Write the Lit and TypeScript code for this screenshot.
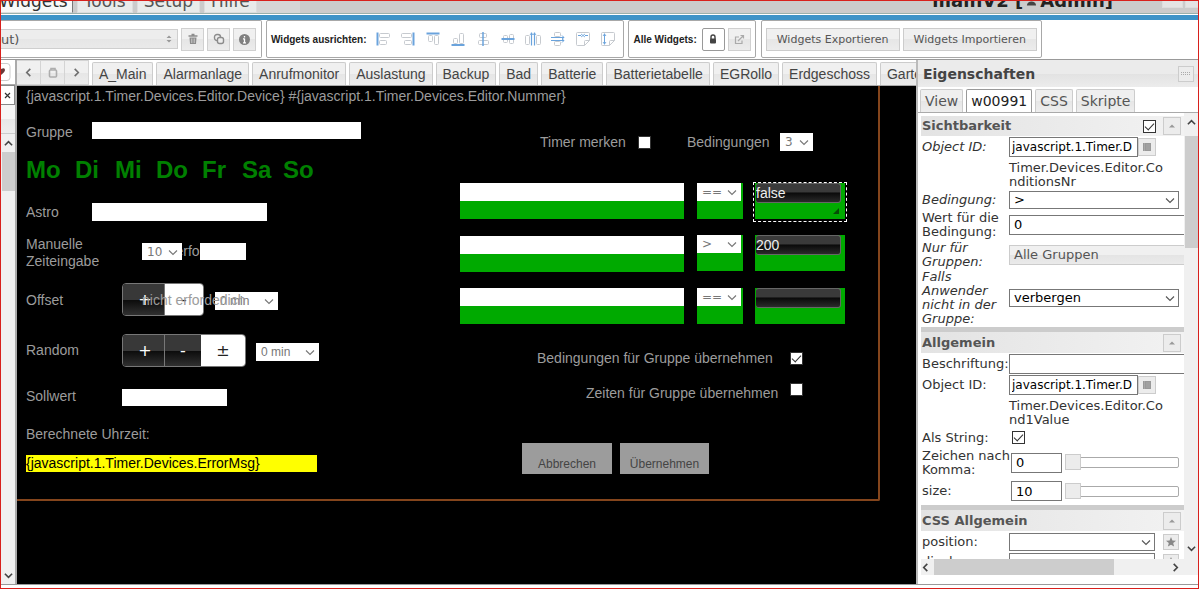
import { LitElement, html, svg, css, TemplateResult } from "lit";
import { customElement, state } from "lit/decorators.js";
import { classMap } from "lit/directives/class-map.js";
import { styleMap } from "lit/directives/style-map.js";

const SANS = css`"Liberation Sans", Arial, sans-serif`;
const WIDE = css`"DejaVu Sans", Verdana, sans-serif`;

const chevron = (size: number, d = "M1 3.5 L5 7.5 L9 3.5") => html`
  <svg class="chev" width=${size} height=${size} viewBox="0 0 10 10" fill="none" stroke="currentColor" stroke-width="1.1" aria-hidden="true"><path d=${d}></path></svg>`;

const UP = "M1 7 L5 3 L9 7";
const DOWN = "M1 3 L5 7 L9 3";
const LEFT = "M7 1 L3 5 L7 9";
const RIGHT = "M3 1 L7 5 L3 9";

const bar = (d: string) => html`
  <svg width="9" height="9" viewBox="0 0 10 10" fill="none" stroke="#444" stroke-width="1.8" aria-hidden="true"><path d=${d}></path></svg>`;

const shared = css`
  *, *::before, *::after { box-sizing: border-box; }
  button, input, select { font: inherit; color: inherit; margin: 0; border-radius: 0; }
  button { padding: 0; cursor: pointer; }
  svg { display: block; flex: none; }
  .combo { display: grid; align-items: center; }
  .combo > select { grid-area: 1 / 1; appearance: none; width: 100%; height: 100%; outline: none; }
  .combo > .chev { grid-area: 1 / 1; justify-self: end; margin-right: 4px; pointer-events: none; }
  .check { appearance: none; width: 13px; height: 13px; background: #fff; border: 1px solid #333; display: grid; place-items: center; flex: none; }
  .check:checked::before { content: ""; width: 9px; height: 5px; border: solid #333; border-width: 0 0 1px 1px; transform: translateY(-1px) rotate(-47deg); }
`;

/* ---------- toolbar ---------- */

const boxA = (x: number, y: number, w: number, h: number) =>
  svg`<rect x=${x} y=${y} width=${w} height=${h} rx="1" fill="#fff" stroke="#c6cacf" stroke-width="1"/>`;
const blue = (d: string, w = 1.5) => svg`<path d=${d} fill="none" stroke="#6aa3dc" stroke-width=${w}/>`;
const page = svg`<path d="M2.5 1.5h11q1 0 1 1v7l-5 5h-7q-1 0-1-1v-11q0-1 1-1z M9.5 14.5v-4q0-1 1-1h4" fill="#fff" stroke="#c6cacf"/>`;

const ALIGN: { label: string; art: unknown }[] = [
  { label: "Links", art: [boxA(4.5, 2.5, 10, 4), boxA(4.5, 9.5, 7, 4), blue("M2.5 1.500v13", 2)] },
  { label: "Rechts", art: [boxA(1.5, 2.5, 10, 4), boxA(4.5, 9.5, 7, 4), blue("M13.5 1.500v13", 2)] },
  { label: "Oben", art: [boxA(3.5, 4.5, 4, 6), boxA(9.5, 4.5, 4, 9), blue("M1.500 2.5h13", 2)] },
  { label: "Unten", art: [boxA(3.5, 7.5, 4, 5), boxA(9.5, 2.5, 4, 10), blue("M1.500 14h13", 2)] },
  { label: "Mitte vertikal", art: [boxA(4.5, 2.5, 7, 4), boxA(3.5, 9.5, 10, 4), blue("M8 1v14", 1.5)] },
  { label: "Mitte horizontal", art: [boxA(3.5, 4.5, 4, 7), boxA(9.5, 3.5, 4, 9), blue("M1.500 8h13", 2)] },
  { label: "Abstand horizontal", art: [boxA(0.5, 4.5, 4, 9), boxA(11.5, 4.5, 4, 9), blue("M6.5 1.500v13M9.5 1.500v13", 1.2), blue("M5 4l1.500-2 1.500 2M8 4l1.500-2 1.500 2", 0.8)] },
  { label: "Abstand vertikal", art: [boxA(4.5, 1.5, 6, 4), boxA(4.5, 10.5, 6, 4), blue("M1 6.5h13M1 9.5h13", 1.2), blue("M12 4.500l2 2-2 1.500M12 8l2 1.500-2 2", 1)] },
  { label: "Gleiche Breite", art: [page, blue("M3 4.5h3M10 4.5h3", 1.2), blue("M6 3l2 1.5-2 1.5M10 3l-2 1.5 2 1.5", 0.8)] },
  { label: "Gleiche Höhe", art: [page, blue("M4.5 2.500v11", 1), blue("M3 5l1.5-2L6 5M3 11l1.5 2L6 11", 0.9)] },
];

@customElement("vis-toolbar")
class VisToolbar extends LitElement {
  static styles = [shared, css`
    :host { display: flex; gap: 4px; height: 40px; background: #fff; border-bottom: 1px solid #999; padding-bottom: 1px; }
    .group { display: flex; align-items: center; border: 1px solid #a8a8a8; border-radius: 2px; padding: 0 4px; }
    .pick { border-left: 0; padding: 0 5px 0 0; gap: 3px; border-radius: 0 2px 2px 0; }
    .combo { width: 177px; height: 20px; font: 13px ${WIDE}; color: #555; background: linear-gradient(#ededed 50%, #e6e6e6 50%, #eaeaea); }
    .combo > select { border: 1px solid #cfcfcf; border-left: 0; background: transparent; padding: 0; }
    .updown { grid-area: 1 / 1; justify-self: end; margin-right: 5px; pointer-events: none; }
    .tool { width: 23px; height: 23px; border: 1px solid #d0d0d0; background: linear-gradient(#f0f0f0 50%, #e6e6e6 50%, #ececec); display: grid; place-items: center; color: #888; flex: none; }
    .tool.on { background: #fff; border-color: #999; border-radius: 2px; color: #444; }
    .caption { font: bold 10px ${SANS}; color: #222; white-space: nowrap; }
    .icons { display: flex; gap: 9px; padding: 0 3px 0 9px; }
    .icon { border: 0; background: none; width: 16px; height: 16px; }
    .all { gap: 3px; }
    .all .caption { margin-right: 2px; }
    .io { gap: 3px; margin-left: 1px; }
    .io button { height: 23px; padding: 0 10px; border: 1px solid #ccc; background: linear-gradient(#f0f0f0 50%, #e6e6e6 50%, #ececec); font: 11px ${WIDE}; color: #555; white-space: nowrap; }
  `];

  render() {
    return html`
      <div class="group pick">
        <span class="combo">
          <select aria-label="Widget auswählen"><option>ut)</option></select>
          <svg class="updown" width="8" height="10" viewBox="0 0 8 10" fill="#999"><path d="M1.5 4 4 1.5 6.5 4z M1.5 6 4 8.5 6.5 6z"></path></svg>
        </span>
        <button class="tool" aria-label="Löschen">
          <svg width="12" height="12" viewBox="0 0 12 12"><path d="M1.500 3h9M4.500 1.500h3" stroke="#8c8c8c" stroke-width="1.400"></path><path d="M2.500 4.500h7l-.5 6.500h-6z" fill="#8c8c8c"></path><path d="M4.800 5.500v4.500M7.200 5.500v4.500" stroke="#ddd" stroke-width=".8"></path></svg>
        </button>
        <button class="tool" aria-label="Kopieren">
          <svg width="12" height="12" viewBox="0 0 12 12" fill="#eee" stroke="#8c8c8c" stroke-width="1.400"><rect x="1.500" y="1.500" width="6" height="6" rx="2.500"></rect><rect x="4.500" y="4.500" width="6" height="6" rx="2"></rect></svg>
        </button>
        <button class="tool" aria-label="Info">
          <svg width="13" height="13" viewBox="0 0 13 13"><circle cx="6.500" cy="6.500" r="5.500" fill="#808080"></circle><path d="M6.500 3v1.600M6.500 5.600v4.400M5 5.900h1.500M5 9.800h3" stroke="#fff" stroke-width="1.300"></path></svg>
        </button>
      </div>
      <div class="group">
        <span class="caption">Widgets ausrichten:</span>
        <div class="icons">
          ${ALIGN.map((a) => html`<button class="icon" aria-label=${a.label}><svg width="16" height="16" viewBox="0 0 16 16">${a.art}</svg></button>`)}
        </div>
      </div>
      <div class="group all">
        <span class="caption">Alle Widgets:</span>
        <button class="tool on" aria-label="Sperren">
          <svg width="10" height="12" viewBox="0 0 10 12"><path d="M3 6V4a2 2 0 0 1 4 0v2" fill="none" stroke="#444" stroke-width="1.400"></path><rect x="2" y="5.500" width="6" height="5" rx="1" fill="#444"></rect></svg>
        </button>
        <button class="tool" aria-label="Öffnen">
          <svg width="11" height="11" viewBox="0 0 11 11" fill="none" stroke="#aaa" stroke-width="1.200"><path d="M5 3H1.500v6.500H8V6.500M4 7l5.500-5.500M6.500 1.500h3v3"></path></svg>
        </button>
      </div>
      <div class="group io">
        <button>Widgets Exportieren</button>
        <button>Widgets Importieren</button>
      </div>`;
  }
}

/* ---------- canvas ---------- */

interface Widget { x: number; y: number; w?: number; h?: number; body: TemplateResult | string; kind?: string; }

const field = (label: string) => html`<input class="fill" type="text" aria-label=${label} />`;
const pick = (label: string, value: string, wide = false) => html`
  <span class=${classMap({ combo: true, fill: true, wide })}><select aria-label=${label}><option>${value}</option></select>${chevron(10)}</span>`;

const DAYS: [string, number][] = [["Mo", 9], ["Di", 58], ["Mi", 98], ["Do", 139], ["Fr", 185], ["Sa", 225], ["So", 266]];
const CONDITIONS = [
  { top: 97, fieldTop: 97, op: "==", value: "false" },
  { top: 149, fieldTop: 150, op: ">", value: "200" },
  { top: 202, fieldTop: 202, op: "==", value: "" },
];

const WIDGETS: Widget[] = [
  { x: 9, y: 2, body: "{javascript.1.Timer.Devices.Editor.Device} #{javascript.1.Timer.Devices.Editor.Nummer}" },
  { x: 9, y: 38, body: "Gruppe" },
  { x: 75, y: 36, w: 269, h: 17, body: field("Gruppe") },
  ...DAYS.map(([d, x]) => ({ x, y: 70, body: d, kind: "day" })),
  { x: 9, y: 118, body: "Astro" },
  { x: 75, y: 117, w: 175, h: 18, body: field("Astro") },
  { x: 9, y: 150, w: 90, body: "Manuelle Zeiteingabe", kind: "wrap" },
  { x: 125, y: 157, body: "nicht erforderlich" },
  { x: 125, y: 157, w: 40, h: 17, body: pick("Stunde", "10", true) },
  { x: 183, y: 157, w: 46, h: 17, body: field("Minute") },
  { x: 9, y: 206, body: "Offset" },
  { x: 105, y: 197, w: 82, h: 33, body: html`<span class="set fill"><button class="plus">+</button><button class="on">-</button></span>` },
  { x: 198, y: 206, w: 63, h: 18, body: pick("Offset in Minuten", "0 min") },
  { x: 125, y: 206, body: "nicht erforderlich" },
  { x: 9, y: 256, body: "Random" },
  { x: 105, y: 248, w: 124, h: 33, body: html`<span class="set fill"><button class="plus">+</button><button class="minus">-</button><button class="on">±</button></span>` },
  { x: 239, y: 257, w: 63, h: 18, body: pick("Random in Minuten", "0 min") },
  { x: 9, y: 302, body: "Sollwert" },
  { x: 105, y: 303, w: 105, h: 17, body: field("Sollwert") },
  { x: 9, y: 340, body: "Berechnete Uhrzeit:" },
  { x: 9, y: 369, w: 291, h: 17, body: "{javascript.1.Timer.Devices.ErrorMsg}", kind: "error" },
  { x: 523, y: 48, body: html`<label for="keep">Timer merken</label>` },
  { x: 621, y: 50, body: html`<input id="keep" class="check" type="checkbox" />` },
  { x: 670, y: 48, body: "Bedingungen" },
  { x: 763, y: 47, w: 33, h: 18, body: pick("Bedingungen", "3", true) },
  ...CONDITIONS.flatMap((c, i): Widget[] => [
    { x: 443, y: c.fieldTop, w: 224, h: 36, kind: "green", body: html`<input type="text" aria-label="Bedingung ${i + 1}" />` },
    { x: 680, y: c.top, w: 46, h: 36, kind: "green op", body: pick("Operator " + (i + 1), c.op, true) },
    { x: 738, y: c.top, w: 90, h: 36, kind: "green val", body: html`<input type="text" aria-label="Wert ${i + 1}" .value=${c.value} />` },
  ]),
  { x: 736, y: 96, w: 94, h: 40, kind: "selected", body: html`<svg width="6" height="6" viewBox="0 0 6 6"><path d="M6 0v6H0z" fill="#064d06"></path></svg>` },
  { x: 520, y: 264, body: html`<label for="cg">Bedingungen für Gruppe übernehmen</label>` },
  { x: 773, y: 266, body: html`<input id="cg" class="check" type="checkbox" checked />` },
  { x: 569, y: 299, body: html`<label for="zg">Zeiten für Gruppe übernehmen</label>` },
  { x: 773, y: 297, body: html`<input id="zg" class="check" type="checkbox" />` },
  { x: 505, y: 357, w: 90, h: 31, body: html`<button class="action fill">Abbrechen</button>` },
  { x: 603, y: 357, w: 89, h: 31, body: html`<button class="action fill">Übernehmen</button>` },
];

@customElement("vis-canvas")
class VisCanvas extends LitElement {
  static styles = [shared, css`
    :host { display: block; position: relative; overflow: hidden; background: #000; color: #9c9c9c; font: 14px/17px ${SANS}; }
    .frame { position: absolute; border: solid #84451c; border-width: 0 2px 2px 0; border-radius: 0 0 2px 0; }
    .w { position: absolute; white-space: nowrap; }
    .wrap { white-space: normal; }
    .day { font: bold 24px/28px ${SANS}; color: #008000; }
    .error { background: #ff0; color: #000; }
    .green { background: #00aa00; }
    .green > input { display: block; width: 100%; height: 18px; border: 0; background: #fff; padding: 0; }
    .op > .combo { width: 44px; height: 18px; }
    .val { padding: 0 4px 0 1px; }
    .val > input { height: 20px; border: 1px solid #666; border-left: 0; border-radius: 3px; color: #eee; background: linear-gradient(#3a3a3a 0 44%, #0a0a0a 50%, #2a2a2a); }
    .selected { border: 1px dashed #fff; display: flex; justify-content: end; align-items: end; padding: 7px; pointer-events: none; }
    .fill { width: 100%; height: 100%; }
    input.fill { display: block; border: 0; background: #fff; }
    .combo { background: #fff; color: #777; font: 12px ${SANS}; }
    .combo.wide { font: 12px ${WIDE}; }
    .combo > select { border: 0; background: transparent; padding: 0 0 0 5px; }
    .set { display: flex; font: 16px ${WIDE}; color: #fff; border: 1px solid #777; border-radius: 4px; overflow: hidden; }
    .set button { flex: 1; border: 0; background: linear-gradient(#383838 50%, #0c0c0c 52%, #303030); }
    .set .plus { flex: 0 0 42px; border-right: 1px solid #777; padding-left: 3px; }
    .set .minus { flex: 0 0 36px; }
    .set .on { background: #fff; color: #222; }
    .action { border: 0; background: #9c9c9c; color: #444; font: 12px ${SANS}; padding-top: 10px; }
  `];

  render() {
    return html`
      <div class="frame" style=${styleMap({ left: "0", top: "0", width: "863px", height: "415px" })}></div>
      ${WIDGETS.map((w) => html`<div class="w ${w.kind ?? ""}" style=${styleMap({
        left: `${w.x}px`, top: `${w.y}px`,
        ...(w.w ? { width: `${w.w}px` } : {}), ...(w.h ? { height: `${w.h}px` } : {}),
      })}>${w.body}</div>`)}`;
  }
}

/* ---------- properties ---------- */

@customElement("vis-properties")
class VisProperties extends LitElement {
  static styles = [shared, css`
    :host { display: flex; flex-direction: column; min-height: 0; border-left: 2px solid #bbb; background: #fff; font: 13px/14px ${WIDE}; color: #333; }
    .head { display: flex; align-items: center; justify-content: space-between; height: 27px; padding: 0 4px 0 5px; background: linear-gradient(#ebebeb 50%, #e2e2e2 50%, #ececec); }
    h1 { margin: 0; font: bold 14px/20px ${WIDE}; color: #444; }
    .fold { width: 16px; height: 16px; border: 1px solid #ccc; background: #ececec; display: grid; place-items: center; }
    .tabs { display: flex; gap: 3px; padding: 2px 2px 0; height: 26px; border-bottom: 1px solid #aaa; }
    .tabs button { border: 1px solid #ccc; border-bottom: 0; background: linear-gradient(#efefef 50%, #e6e6e6 50%, #eee); padding: 0 4px; font: 14px ${WIDE}; color: #555; border-radius: 2px 2px 0 0; white-space: nowrap; }
    .tabs .on { background: #fff; border-color: #999; color: #222; }
    .scroll { flex: 1; min-height: 0; display: flex; margin-bottom: 9px; }
    .main { flex: 1; min-width: 0; display: flex; flex-direction: column; padding-left: 3px; }
    .list { flex: 1; min-height: 0; overflow: hidden; display: flex; flex-direction: column; gap: 1px; padding-top: 3px; }
    .list > * { flex: none; }
    h2 { margin: 0; display: flex; align-items: center; height: 20px; padding: 0 3px 0 1px; font: bold 13px/16px ${WIDE}; color: #555; background: linear-gradient(90deg, #e3e3e3, #f2f2f2); }
    h2 > span { flex: 1; }
    h2 .mini { margin-left: 7px; }
    h2.cut { border-top: 5px solid #ccc; height: 26px; }
    .mini { width: 18px; height: 18px; border: 1px solid #ccc; background: #ececec; display: grid; place-items: center; flex: none; }
    .row { display: grid; grid-template-columns: 88px 1fr; align-items: center; min-height: 19px; }
    .row > label { padding-left: 1px; margin-right: -4px; }
    .it > label { font-style: italic; }
    .two { min-height: 29px; }
    .two > label { margin-right: 0; }
    .loose > label { margin-right: -4px; }
    .row.top { align-items: start; }
    .top > label { line-height: 20px; }
    .box { height: 20px; border: 1px solid #777; background: #fff; padding: 0 4px; color: #000; min-width: 0; }
    .id { width: 129px; padding: 0 1px 0 2px; font-size: 12px; }
    .wide { width: 180px; }
    .num { width: 51px; }
    .line { display: flex; align-items: center; }
    .line .check { margin-left: 3px; }
    .slide { padding-left: 2px; gap: 3px; height: 26px; }
    .hint { margin-top: 4px; overflow-wrap: anywhere; width: 158px; }
    .combo { width: 170px; height: 18px; color: #000; background: #fff; }
    .combo > .chev { color: #555; }
    .combo.short { width: 146px; margin-right: 8px; }
    .combo > select { border: 1px solid #777; background: transparent; padding: 0 4px; }
    .groups { width: 180px; height: 20px; border: 1px solid #ccc; background: linear-gradient(#f0f0f0 50%, #e4e4e4 50%, #eaeaea); color: #555; text-align: left; padding: 0 4px; }
    .range { appearance: none; width: 114px; height: 16px; background: none; }
    .range::-webkit-slider-runnable-track { height: 11px; border: 1px solid #aaa; border-radius: 2px; background: #fff; }
    .range::-webkit-slider-thumb { appearance: none; width: 16px; height: 16px; margin-top: -4px; margin-left: -1px; border: 1px solid #ccc; background: #ececec; }
    .vbar { width: 14px; flex: none; background: #f0f0f0; display: flex; flex-direction: column; align-items: center; padding: 5px 0 22px 1px; }
    .thumb { width: 13px; height: 112px; background: #cdcdcd; margin: 9px 0 auto; flex: none; }
    .hbar { height: 16px; flex: none; background: #f0f0f0; display: flex; align-items: center; padding: 0 4px 0 0; }
    .hthumb { height: 16px; width: 180px; background: #cdcdcd; margin: 0 auto 0 4px; }
    .star { width: 16px; height: 16px; }
  `];

  @state() private tab = "w00991";

  private row(id: string, label: string, body: unknown, cls = "") {
    return html`<div class="row ${cls}"><label for=${id}>${label}</label>${body}</div>`;
  }
  private select(id: string, value: string, short = false) {
    return html`<span class=${classMap({ combo: true, short })}><select id=${id}><option>${value}</option></select>${chevron(10)}</span>`;
  }
  private mini(label: string, star = false) {
    return html`<button class=${classMap({ mini: true, star })} aria-label=${label}>${star
      ? html`<svg width="10" height="10" viewBox="0 0 10 10" fill="#888"><path d="M5 0l1.400 3.400 3.600.3-2.800 2.300.9 3.600L5 7.700 1.900 9.600l.9-3.600L0 3.700l3.600-.3z"></path></svg>`
      : html`<svg width="8" height="6" viewBox="0 0 8 6" fill="#999"><path d="M1 4.500 4 1.500 7 4.500z"></path></svg>`}</button>`;
  }
  private objectId(id: string, hint: string) {
    return html`<div>
      <div class="line"><input id=${id} class="box id" type="text" value="javascript.1.Timer.D" />
        <button class="mini" aria-label="Objekt wählen"><svg width="8" height="8" viewBox="0 0 8 8"><rect x="0" y="0" width="8" height="8" fill="#999"></rect><path d="M1.500 0v8M3 2h4M3 4h4M3 6h4" stroke="#bbb" stroke-width=".5"></path></svg></button></div>
      <div class="hint">${hint}</div></div>`;
  }
  private slider(id: string, value: string) {
    return html`<div class="line slide"><input id=${id} class="box num" type="text" value=${value} />
      <input class="range" type="range" min="0" max="100" value="0" aria-label=${id} /></div>`;
  }

  render() {
    return html`
      <div class="head"><h1>Eigenschaften</h1>
        <button class="fold" aria-label="Einklappen"><svg width="10" height="4" viewBox="0 0 10 4" stroke="#aaa" stroke-dasharray="1 1"><path d="M0 .5h10M0 2.500h10"></path></svg></button></div>
      <div class="tabs">${["View", "w00991", "CSS", "Skripte"].map((t) => html`
        <button class=${classMap({ on: t === this.tab })} @click=${() => (this.tab = t)}>${t}</button>`)}</div>
      <div class="scroll">
        <div class="main">
          <div class="list">
            <h2><span>Sichtbarkeit</span><input class="check" type="checkbox" checked aria-label="Sichtbarkeit" />${this.mini("Einklappen")}</h2>
            ${this.row("vid", "Object ID:", this.objectId("vid", "Timer.Devices.Editor.ConditionsNr"), "top it")}
            ${this.row("cond", "Bedingung:", this.select("cond", ">"), "it")}
            ${this.row("cval", "Wert für die Bedingung:", html`<input id="cval" class="box wide" type="text" value="0" />`, "two")}
            ${this.row("grp", "Nur für Gruppen:", html`<button id="grp" class="groups">Alle Gruppen</button>`, "it two")}
            ${this.row("els", "Falls Anwender nicht in der Gruppe:", this.select("els", "verbergen"), "it two")}
            <h2 class="cut"><span>Allgemein</span>${this.mini("Einklappen")}</h2>
            ${this.row("cap", "Beschriftung:", html`<input id="cap" class="box wide" type="text" />`)}
            ${this.row("oid", "Object ID:", this.objectId("oid", "Timer.Devices.Editor.Cond1Value"), "top")}
            ${this.row("str", "Als String:", html`<div class="line"><input id="str" class="check" type="checkbox" checked /></div>`)}
            ${this.row("dec", "Zeichen nach Komma:", this.slider("dec", "0"), "two loose")}
            ${this.row("size", "size:", this.slider("size", "10"))}
            <h2 class="cut"><span>CSS Allgemein</span>${this.mini("Einklappen")}</h2>
            ${this.row("pos", "position:", html`<div class="line">${this.select("pos", "", true)}${this.mini("Merken", true)}</div>`)}
            ${this.row("disp", "display:", html`<div class="line">${this.select("disp", "", true)}${this.mini("Merken", true)}</div>`)}
          </div>
          <div class="hbar">${bar(LEFT)}<div class="hthumb"></div>${bar(RIGHT)}</div>
        </div>
        <div class="vbar">${bar(UP)}<div class="thumb"></div>${bar(DOWN)}</div>
      </div>`;
  }
}

/* ---------- shell ---------- */

const VIEWS = ["A_Main", "Alarmanlage", "Anrufmonitor", "Auslastung", "Backup", "Bad", "Batterie", "Batterietabelle", "EGRollo", "Erdgeschoss", "Garten"];

@customElement("app-root")
class AppRoot extends LitElement {
  static styles = [shared, css`
    :host { display: flex; flex-direction: column; box-sizing: border-box; height: 100vh; overflow: hidden; border: 1px solid #d8201c; background: #fff; font: 13px ${WIDE}; color: #333; }
    .menu { display: flex; align-items: end; height: 13px; flex: none; overflow: hidden; background: #cbcbcb; border-bottom: 1px solid #9ab0ac; gap: 4px; }
    .menu button { height: 24px; border: 1px solid #ddd; background: #e9ebea; font: 17px/20px ${WIDE}; color: #555; padding: 0 6px; flex: none; }
    .menu .on { background: #f8f8f8; color: #333; border-right-color: #777; padding: 0 4px 0 0; border-left: 0; margin-left: -2px; }
    .menu .rest { width: 43px; padding: 0; margin-left: -4px; background: #d6d6d6; border-color: #d6d6d6; }
    .title { margin-left: auto; display: flex; align-items: center; gap: 3px; font: bold 18px/24px ${WIDE}; color: #222; white-space: nowrap; padding-right: 45px; height: 24px; }
    .menu .sys { width: 21px; padding: 0; height: 24px; background: #e4e4e4; margin-bottom: 5px; }
    .menu .sys:last-child { margin: 0 -8px 5px -2px; }
    .stripe { height: 6px; flex: none; background: #3d93c8; border-top: 1px solid #fff; }
    vis-toolbar { flex: none; }
    .body { flex: 1; min-height: 0; display: flex; border-bottom: 1px solid #999; margin-bottom: 3px; }
    .side { width: 16px; flex: none; display: flex; flex-direction: column; align-items: center; border-right: 2px solid #aaa; background: #f0f0f0; }
    .side button { width: 100%; display: grid; place-items: center; flex: none; }
    .heart { height: 25px; border: 0; border-bottom: 1px solid #aaa; background: #fff; }
    .close { height: 20px; border: 1px solid #888; border-left: 0; background: #fff; font: 11px ${WIDE}; }
    .bar { height: 29px; width: 100%; background: linear-gradient(#f6f6f6 50%, #e8e8e8 50%, #eee); border-bottom: 1px solid #ccc; margin-bottom: 5px; flex: none; }
    .sthumb { width: 13px; height: 39px; background: #cdcdcd; margin: 4px 0 auto; flex: none; }
    .side .last { margin-bottom: 4px; }
    .center { flex: 1; min-width: 0; display: flex; flex-direction: column; }
    .views { display: flex; align-items: end; gap: 3px; height: 26px; flex: none; overflow: hidden; border-bottom: 1px solid #aaa; background: #fff; }
    .nav { display: flex; height: 25px; flex: none; }
    .nav button { width: 24px; border: 1px solid #d4d4d4; border-left: 0; background: linear-gradient(#f0f0f0 50%, #e6e6e6 50%, #ececec); display: grid; place-items: center; }
    .view { height: 23px; padding: 0 6px; border: 1px solid #ccc; border-bottom: 0; background: linear-gradient(#f0f0f0 50%, #e6e6e6 50%, #ececec); font: 14px ${SANS}; color: #444; flex: none; border-radius: 2px 2px 0 0; }
    .nav svg { opacity: .75; }
    vis-canvas { flex: 1; min-height: 0; }
    vis-properties { width: 282px; flex: none; }
  `];

  render() {
    return html`
      <nav class="menu">
        <button class="on">Widgets</button><button>Tools</button><button>Setup</button><button>Hilfe</button><button class="rest" aria-label="Weitere"></button>
        <span class="title">mainV2 [
          <svg width="11" height="14" viewBox="0 0 12 14" fill="#444"><circle cx="6" cy="4" r="3"></circle><path d="M1 12c0-6 10-6 10 0z"></path></svg>
          Admin]</span>
        <button class="sys" aria-label="Minimieren"></button><button class="sys" aria-label="Schließen"></button>
      </nav>
      <div class="stripe"></div>
      <vis-toolbar></vis-toolbar>
      <div class="body">
        <aside class="side">
          <button class="heart" aria-label="Favoriten"><svg width="14" height="18" viewBox="0 0 14 18"><path d="M0 .5h6q3 0 3 3v11q0 3-3 3H0" fill="#fff" stroke="#ccc"></path><path d="M0 6q4-2 4 1 0 2-4 5z" fill="#6a3a3a"></path></svg></button>
          <button class="close" aria-label="Schließen"><svg width="7" height="7" viewBox="0 0 7 7" stroke="#333" stroke-width="1.200"><path d="M1 1l5 5M6 1L1 6"></path></svg></button>
          <div class="bar"></div>
          ${bar(UP)}<div class="sthumb"></div>
          <span class="last">${bar(DOWN)}</span>
        </aside>
        <section class="center">
          <div class="views">
            <div class="nav">
              <button aria-label="Zurück">${bar(LEFT)}</button>
              <button aria-label="Ansicht löschen"><svg width="10" height="11" viewBox="0 0 10 11" fill="none" stroke="#999" stroke-width="1.600"><rect x="1.500" y="3" width="7" height="7" rx="1"></rect><path d="M3 3V1.500h4V3"></path></svg></button>
              <button aria-label="Weiter">${bar(RIGHT)}</button>
            </div>
            ${VIEWS.map((v) => html`<button class="view">${v}</button>`)}
          </div>
          <vis-canvas></vis-canvas>
        </section>
        <vis-properties></vis-properties>
      </div>`;
  }
}
